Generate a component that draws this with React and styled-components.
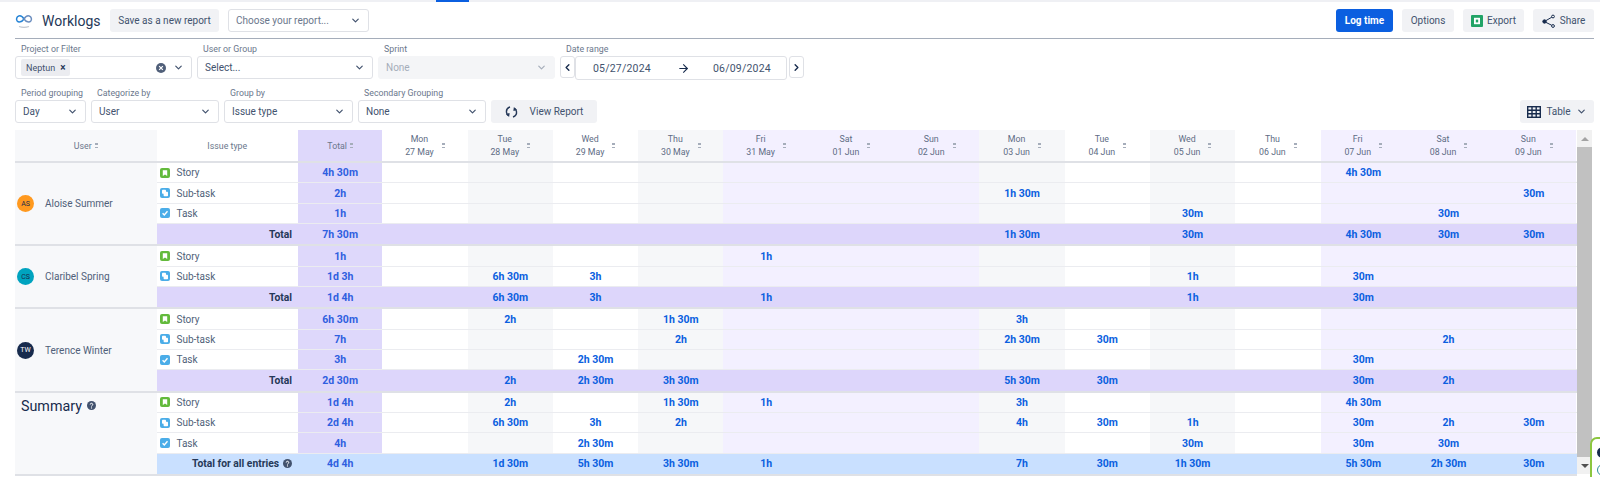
import React from "react";
import styled, { createGlobalStyle } from "styled-components";
import { ChevronDown, ChevronLeft, ChevronRight, ArrowRight } from "lucide-react";

const GlobalStyle = createGlobalStyle`
  html, body { margin: 0; padding: 0; background: #fff; }
  body {
    font-family: Roboto, "Noto Sans", sans-serif;
    color: #42526e;
    overflow: hidden;
  }
`;

const DAYS = [
  ["Mon", "27 May", "plain"], ["Tue", "28 May", "grey"], ["Wed", "29 May", "plain"], ["Thu", "30 May", "grey"],
  ["Fri", "31 May", "lav"], ["Sat", "01 Jun", "lav"], ["Sun", "02 Jun", "lav"],
  ["Mon", "03 Jun", "grey"], ["Tue", "04 Jun", "plain"], ["Wed", "05 Jun", "grey"], ["Thu", "06 Jun", "plain"],
  ["Fri", "07 Jun", "lav"], ["Sat", "08 Jun", "lav"], ["Sun", "09 Jun", "lav"],
];

const GROUPS = [
  {
    name: "Aloise Summer", initials: "AS", color: "#ff991f", ink: "#172b4d",
    rows: [
      ["Story", "4h 30m", { 11: "4h 30m" }],
      ["Sub-task", "2h", { 7: "1h 30m", 13: "30m" }],
      ["Task", "1h", { 9: "30m", 12: "30m" }],
    ],
    total: ["7h 30m", { 7: "1h 30m", 9: "30m", 11: "4h 30m", 12: "30m", 13: "30m" }],
  },
  {
    name: "Claribel Spring", initials: "CS", color: "#00a3bf", ink: "#172b4d",
    rows: [
      ["Story", "1h", { 4: "1h" }],
      ["Sub-task", "1d 3h", { 1: "6h 30m", 2: "3h", 9: "1h", 11: "30m" }],
    ],
    total: ["1d 4h", { 1: "6h 30m", 2: "3h", 4: "1h", 9: "1h", 11: "30m" }],
  },
  {
    name: "Terence Winter", initials: "TW", color: "#172b4d", ink: "#fff",
    rows: [
      ["Story", "6h 30m", { 1: "2h", 3: "1h 30m", 7: "3h" }],
      ["Sub-task", "7h", { 3: "2h", 7: "2h 30m", 8: "30m", 12: "2h" }],
      ["Task", "3h", { 2: "2h 30m", 11: "30m" }],
    ],
    total: ["2d 30m", { 1: "2h", 2: "2h 30m", 3: "3h 30m", 7: "5h 30m", 8: "30m", 11: "30m", 12: "2h" }],
  },
];

const SUMMARY = {
  rows: [
    ["Story", "1d 4h", { 1: "2h", 3: "1h 30m", 4: "1h", 7: "3h", 11: "4h 30m" }],
    ["Sub-task", "2d 4h", { 1: "6h 30m", 2: "3h", 3: "2h", 7: "4h", 8: "30m", 9: "1h", 11: "30m", 12: "2h", 13: "30m" }],
    ["Task", "4h", { 2: "2h 30m", 9: "30m", 11: "30m", 12: "30m" }],
  ],
  total: ["4d 4h", { 1: "1d 30m", 2: "5h 30m", 3: "3h 30m", 4: "1h", 7: "7h", 8: "30m", 9: "1h 30m", 11: "5h 30m", 12: "2h 30m", 13: "30m" }],
};

const Page = styled.div`
  width: 1600px;
  height: 477px;
  position: relative;
  overflow: hidden;
`;

const TopStrip = styled.div`
  height: 2px;
  background: #eff0f4;
  padding-left: 436px;
  &::before {
    content: "";
    display: block;
    width: 33px;
    height: 2px;
    background: #0b5fe0;
  }
`;

const Main = styled.div`
  padding: 7px 6px 0 15px;
`;

const TitleBar = styled.div`
  display: flex;
  align-items: center;
  gap: 9px;
  height: 23px;
  padding-bottom: 6px;
  border-bottom: 1px solid #a5adba;
`;

const Logo = styled.svg`
  width: 18px;
  height: 16px;
`;

const Title = styled.div`
  font-size: 14px;
  color: #253858;
  width: 59px;
  white-space: nowrap;
`;

const Spacer = styled.div`
  flex: 1;
`;

const Button = styled.div`
  display: flex;
  align-items: center;
  justify-content: center;
  gap: ${(p) => p.$gap || 0}px;
  width: ${(p) => p.$w}px;
  height: 23px;
  border-radius: 3px;
  font-size: 10px;
  font-weight: ${(p) => (p.$primary ? 700 : 400)};
  background: ${(p) => (p.$primary ? "#0b5fe0" : "#f1f2f5")};
  color: ${(p) => (p.$primary ? "#fff" : "#42526e")};
  flex-shrink: 0;
`;

const Select = styled.div`
  box-sizing: border-box;
  display: flex;
  align-items: center;
  width: ${(p) => p.$w}px;
  height: 23px;
  padding: 0 7px;
  border: 1px solid ${(p) => (p.$disabled ? "#f4f5f7" : "#dfe1e6")};
  border-radius: 3px;
  background: ${(p) => (p.$disabled ? "#f4f5f7" : "#fff")};
  font-size: 10px;
  color: ${(p) => (p.$disabled ? "#a5adba" : p.$muted ? "#6b778c" : "#42526e")};
  flex-shrink: 0;
`;

const SelectText = styled.span`
  flex: 1;
`;

const Chevron = styled(ChevronDown)`
  width: 11px;
  height: 11px;
  stroke-width: 2.6;
  margin-left: ${(p) => p.$left || 0}px;
  color: ${(p) => (p.$faint ? "#a5adba" : "#42526e")};
`;

const FilterRow = styled.div`
  display: flex;
  align-items: flex-start;
  gap: 5px;
  margin-top: 4px;
`;

const Field = styled.div`
  display: flex;
  flex-direction: column;
`;

const Label = styled.div`
  width: 0;
  height: 13px;
  line-height: 13px;
  padding-left: 6px;
  font-size: 8.8px;
  color: #6b778c;
  white-space: nowrap;
`;

const Tag = styled.span`
  display: inline-flex;
  align-items: center;
  gap: 5px;
  height: 17px;
  padding: 0 5px;
  margin-left: -2px;
  border-radius: 2px;
  background: #ebecf0;
  font-size: 9px;
  color: #42526e;
`;

const Cross = styled.span`
  font-size: 10px;
  font-weight: 700;
  color: #253858;
`;

const DateRow = styled.div`
  display: flex;
  align-items: flex-start;
`;

const ArrowBox = styled.div`
  box-sizing: border-box;
  display: flex;
  align-items: center;
  justify-content: center;
  width: 15px;
  height: 22px;
  margin-left: ${(p) => p.$left || 0}px;
  border: 1px solid #dfe1e6;
  border-radius: 3px;
  color: #172b4d;
`;

const DateBox = styled.div`
  box-sizing: border-box;
  display: grid;
  grid-template-columns: 84px 36px 1fr;
  align-items: center;
  width: 212px;
  height: 24px;
  padding-left: 17px;
  border: 1px solid #dfe1e6;
  border-radius: 3px;
  font-size: 10.5px;
  letter-spacing: 0.2px;
  color: #42526e;
`;

const Toolbar = styled.div`
  display: flex;
  align-items: flex-end;
  gap: 5px;
  margin-top: 7px;
`;

const TableWrap = styled.div`
  display: flex;
  margin-top: 7px;
  margin-right: 2px;
`;

const Table = styled.div`
  width: 1562px;
`;

const HeadRow = styled.div`
  display: grid;
  grid-template-columns: 141.5px 141.5px 84.3px repeat(14, 85.3px);
  height: 31px;
  border-bottom: 2px solid #dfe1e6;
`;

const dayBg = { plain: "#fff", grey: "#f6f7f9", lav: "#f3f0ff" };

const HeadCell = styled.div`
  display: flex;
  align-items: center;
  justify-content: center;
  gap: 3px;
  background: ${(p) => p.$bg};
  font-size: 8.8px;
  color: #6b778c;
`;

const DayHead = styled(HeadCell)`
  gap: 8px;
`;

const DayLabel = styled.div`
  text-align: center;
  line-height: 13px;
  font-size: 8.8px;
  color: #5e6c84;
`;

const Sorter = styled.span`
  display: inline-flex;
  flex-direction: column;
  gap: 2px;
  &::before, &::after {
    content: "";
    width: 3px;
    height: 1.5px;
    background: #a5adba;
  }
`;

const Group = styled.div`
  display: grid;
  grid-template-columns: 141.5px 1fr;
  border-bottom: 2px solid #dfe1e6;
`;

const UserCell = styled.div`
  display: flex;
  align-items: center;
  gap: 11px;
  padding-left: 2px;
  background: #f7f8fa;
  font-size: 10px;
  color: #505f79;
`;

const SummaryCell = styled.div`
  display: flex;
  align-items: center;
  gap: 5px;
  height: 14px;
  padding: 6px 0 0 6px;
`;

const SummaryColumn = styled.div`
  background: #f7f8fa;
`;

const SummaryTitle = styled.div`
  font-size: 14.3px;
  color: #172b4d;
`;

const Avatar = styled.div`
  display: flex;
  align-items: center;
  justify-content: center;
  width: 17px;
  height: 17px;
  border-radius: 50%;
  background: ${(p) => p.$color};
  color: ${(p) => p.$ink};
  font-size: 7px;
`;

const Row = styled.div`
  display: grid;
  grid-template-columns: 141.5px 84.3px repeat(14, 85.3px);
  height: 20.35px;
  box-sizing: border-box;
  border-bottom: 1px solid #ebecf0;
  &:last-child { border-bottom: 0; }
`;

const TotalRow = styled(Row)`
  background: ${(p) => (p.$all ? "#c9e0ff" : "#ddd6fb")};
`;

const TypeCell = styled.div`
  display: flex;
  align-items: center;
  gap: 7px;
  padding-left: 3px;
  font-size: 10px;
  color: #505f79;
  background: #fff;
`;

const TotalLabel = styled.div`
  display: flex;
  align-items: center;
  justify-content: flex-end;
  gap: 4px;
  padding-right: 6px;
  font-size: 10.3px;
  font-weight: 700;
  color: #253858;
`;

const Time = styled.div`
  display: flex;
  align-items: center;
  justify-content: center;
  font-size: 10.5px;
  font-weight: 700;
  color: ${(p) => (p.$strong ? "#2f5fe0" : "#0b5fe0")};
  background: ${(p) => p.$bg || "transparent"};
  white-space: nowrap;
`;

const Scrollbar = styled.div`
  display: flex;
  flex-direction: column;
  width: 15px;
  height: 344px;
  background: #f1f1f1;
`;

const ScrollArrow = styled.div`
  display: flex;
  align-items: center;
  justify-content: center;
  height: 17px;
  &::before {
    content: "";
    border-left: 4px solid transparent;
    border-right: 4px solid transparent;
    ${(p) => (p.$down ? "border-top: 4px solid #505050;" : "border-bottom: 4px solid #a3a3a3;")}
  }
`;

const ScrollThumb = styled.div`
  flex: 1;
  background: #c1c1c1;
`;

const ChatWidget = styled.div`
  position: absolute;
  left: 1590px;
  top: 437px;
  width: 30px;
  height: 60px;
  box-sizing: border-box;
  border: 2px solid #8cc63f;
  border-radius: 7px;
  background: #fff;
  padding: 8px 0 0 5px;
  &::before {
    content: "";
    display: block;
    width: 12px;
    height: 11px;
    border-radius: 50%;
    background: #172b4d;
  }
  &::after {
    content: "";
    display: block;
    width: 12px;
    height: 12px;
    margin-top: 6px;
    border-radius: 50%;
    border: 1.5px solid #2f8f9d;
    box-sizing: border-box;
  }
`;

const IssueIcon = ({ type }) => {
  if (type === "Story") {
    return (
      <svg width="10" height="10" viewBox="0 0 10 10">
        <rect width="10" height="10" rx="2" fill="#63ba3c" />
        <path d="M2.800 2.200h4.400v5.800L5 6.500 2.800 8z" fill="#fff" />
      </svg>
    );
  }
  if (type === "Sub-task") {
    return (
      <svg width="10" height="10" viewBox="0 0 10 10">
        <rect width="10" height="10" rx="2" fill="#4bade8" />
        <rect x="2" y="1.800" width="4" height="4" rx="0.800" fill="#fff" />
        <rect x="3.600" y="3.800" width="4.400" height="4.400" rx="0.800" fill="#fff" />
      </svg>
    );
  }
  return (
    <svg width="10" height="10" viewBox="0 0 10 10">
      <rect width="10" height="10" rx="2" fill="#4bade8" />
      <path d="M2.600 5.200l1.700 1.700 3.200-3.600" fill="none" stroke="#fff" strokeWidth="1.400" />
    </svg>
  );
};

const HelpIcon = ({ size = 9 }) => (
  <svg width={size} height={size} viewBox="0 0 12 12">
    <circle cx="6" cy="6" r="6" fill="#42526e" />
    <path d="M4.300 4.700a1.700 1.700 0 1 1 2.500 1.500c-.5.3-.8.6-.8 1.100" fill="none" stroke="#fff" strokeWidth="1.300" />
    <circle cx="6" cy="9.200" r=".8" fill="#fff" />
  </svg>
);

const ClearIcon = () => (
  <svg width="10" height="10" viewBox="0 0 12 12">
    <circle cx="6" cy="6" r="6" fill="#505f79" />
    <path d="M3.800 3.800l4.400 4.400M8.200 3.800L3.800 8.200" stroke="#fff" strokeWidth="1.500" />
  </svg>
);

const RefreshIcon = () => (
  <svg width="13" height="14" viewBox="0 0 13 14" fill="none" stroke="#253858" strokeWidth="1.400">
    <path d="M5 2C2.500 2.800 1.200 5 1.500 7.300c.2 1.300.8 2.400 1.800 3.100" />
    <path d="M1.600 8.800l2 1.800.4-2.500" />
    <path d="M8 12c2.500-.8 3.800-3 3.500-5.300-.2-1.300-.8-2.400-1.800-3.100" />
    <path d="M11.400 5.200l-2-1.800-.4 2.500" />
  </svg>
);

const ExcelIcon = () => (
  <svg width="12" height="12" viewBox="0 0 12 12">
    <rect width="12" height="12" rx="1" fill="#21a366" />
    <rect x="3" y="2.800" width="6" height="6.400" fill="#fff" />
    <rect x="4.800" y="4.600" width="2.400" height="2.800" fill="#21a366" />
  </svg>
);

const ShareIcon = () => (
  <svg width="14" height="14" viewBox="0 0 14 14" fill="#172b4d" stroke="#172b4d" strokeWidth="1">
    <circle cx="2.500" cy="7.500" r="1.700" />
    <circle cx="11" cy="2.500" r="1.400" fill="#fff" />
    <circle cx="11" cy="12" r="1.400" fill="#fff" />
    <path d="M3.800 6.700L9.800 3.200M3.800 8.300L9.800 11.300" fill="none" />
  </svg>
);

const TableIcon = () => (
  <svg width="14" height="12" viewBox="0 0 14 12" fill="none" stroke="#172b4d" strokeWidth="1.400">
    <rect x=".7" y=".7" width="12.600" height="10.600" />
    <path d="M.7 4.300h12.600M.7 7.800h12.600M5 .7v10.600M9.200 .7v10.600" />
  </svg>
);

const WorklogsLogo = () => (
  <Logo viewBox="0 0 18 16" fill="none">
    <path d="M9 6C7.500 3.500 5.500 2.500 3.800 3 1.500 3.700 1 6.500 2.200 8c1.500 1.700 4.500 1.200 6.800-2z" stroke="#2684d6" strokeWidth="1.500" />
    <path d="M9 6c1.500-2.500 3.500-3.500 5.200-3 2.300.7 2.800 3.500 1.600 5-1.500 1.700-4.500 1.200-6.800-2z" stroke="#6c8ebf" strokeWidth="1.500" />
    <path d="M4 13.500c3 1 7 1 10 0" stroke="#c1c7d0" strokeWidth="1.200" />
  </Logo>
);

const DayCells = ({ values, withBg }) =>
  DAYS.map((day, i) => (
    <Time key={i} $bg={withBg ? dayBg[day[2]] : undefined}>
      {values[i] || ""}
    </Time>
  ));

const IssueRow = ({ row }) => (
  <Row>
    <TypeCell>
      <IssueIcon type={row[0]} />
      {row[0]}
    </TypeCell>
    <Time $strong $bg="#ded8fb">{row[1]}</Time>
    <DayCells values={row[2]} withBg />
  </Row>
);

const SumRow = ({ total, label, all }) => (
  <TotalRow $all={all}>
    <TotalLabel>
      {label}
      {all && <HelpIcon />}
    </TotalLabel>
    <Time $strong>{total[0]}</Time>
    <DayCells values={total[1]} />
  </TotalRow>
);

export default function App() {
  return (
    <Page>
      <GlobalStyle />
      <TopStrip />
      <Main>
        <TitleBar>
          <WorklogsLogo />
          <Title>Worklogs</Title>
          <Button $w={109}>Save as a new report</Button>
          <Select $w={141} $muted>
            <SelectText>Choose your report...</SelectText>
            <Chevron />
          </Select>
          <Spacer />
          <Button $w={57} $primary>Log time</Button>
          <Button $w={52}>Options</Button>
          <Button $w={61} $gap={4}><ExcelIcon />Export</Button>
          <Button $w={61} $gap={4}><ShareIcon />Share</Button>
        </TitleBar>

        <FilterRow>
          <Field>
            <Label>Project or Filter</Label>
            <Select $w={177}>
              <SelectText><Tag>Neptun <Cross>×</Cross></Tag></SelectText>
              <ClearIcon />
              <Chevron $left={7} />
            </Select>
          </Field>
          <Field>
            <Label>User or Group</Label>
            <Select $w={176}>
              <SelectText>Select...</SelectText>
              <Chevron />
            </Select>
          </Field>
          <Field>
            <Label>Sprint</Label>
            <Select $w={177} $disabled>
              <SelectText>None</SelectText>
              <Chevron $faint />
            </Select>
          </Field>
          <Field>
            <Label>Date range</Label>
            <DateRow>
              <ArrowBox><ChevronLeft size={11} strokeWidth={3} /></ArrowBox>
              <DateBox>
                <span>05/27/2024</span>
                <ArrowRight size={13} strokeWidth={2} color="#172b4d" />
                <span>06/09/2024</span>
              </DateBox>
              <ArrowBox $left={2}><ChevronRight size={11} strokeWidth={3} /></ArrowBox>
            </DateRow>
          </Field>
        </FilterRow>

        <Toolbar>
          <Field>
            <Label>Period grouping</Label>
            <Select $w={71}><SelectText>Day</SelectText><Chevron /></Select>
          </Field>
          <Field>
            <Label>Categorize by</Label>
            <Select $w={128}><SelectText>User</SelectText><Chevron /></Select>
          </Field>
          <Field>
            <Label>Group by</Label>
            <Select $w={129}><SelectText>Issue type</SelectText><Chevron /></Select>
          </Field>
          <Field>
            <Label>Secondary Grouping</Label>
            <Select $w={128}><SelectText>None</SelectText><Chevron /></Select>
          </Field>
          <Button $w={106} $gap={12}><RefreshIcon />View Report</Button>
          <Spacer />
          <Button $w={74} $gap={5}><TableIcon />Table<Chevron /></Button>
        </Toolbar>

        <TableWrap>
          <Table>
            <HeadRow>
              <HeadCell $bg="#f7f8fa">User <Sorter /></HeadCell>
              <HeadCell $bg="#fff">Issue type</HeadCell>
              <HeadCell $bg="#ded8fb">Total <Sorter /></HeadCell>
              {DAYS.map((day) => (
                <DayHead key={day[1]} $bg={dayBg[day[2]]}>
                  <DayLabel>{day[0]}<br />{day[1]}</DayLabel>
                  <Sorter />
                </DayHead>
              ))}
            </HeadRow>

            {GROUPS.map((group) => (
              <Group key={group.name}>
                <UserCell>
                  <Avatar $color={group.color} $ink={group.ink}>{group.initials}</Avatar>
                  {group.name}
                </UserCell>
                <div>
                  {group.rows.map((row) => <IssueRow key={row[0]} row={row} />)}
                  <SumRow total={group.total} label="Total" />
                </div>
              </Group>
            ))}

            <Group>
              <SummaryColumn>
                <SummaryCell>
                  <SummaryTitle>Summary</SummaryTitle>
                  <HelpIcon />
                </SummaryCell>
              </SummaryColumn>
              <div>
                {SUMMARY.rows.map((row) => <IssueRow key={row[0]} row={row} />)}
                <SumRow total={SUMMARY.total} label="Total for all entries" all />
              </div>
            </Group>
          </Table>
          <Scrollbar>
            <ScrollArrow />
            <ScrollThumb />
            <ScrollArrow $down />
          </Scrollbar>
        </TableWrap>
      </Main>
      <ChatWidget />
    </Page>
  );
}
